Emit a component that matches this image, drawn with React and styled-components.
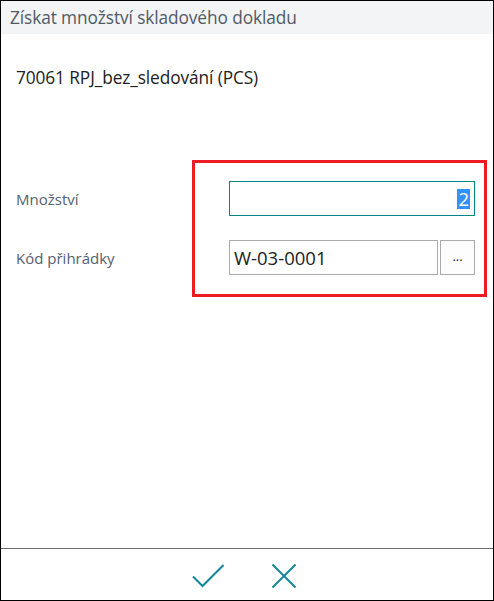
import React from "react"
import styled, { createGlobalStyle } from "styled-components"

const Global = createGlobalStyle`
html, body {
  margin: 0;
  padding: 0;
  background: #ffffff;
}
body {
  font-family: "Open Sans", "Noto Sans", sans-serif;
}
`

const Window = styled.div`
width: 494px;
height: 601px;
box-sizing: border-box;
border: 1px solid #000;
display: flex;
flex-direction: column;
background: #fff;
`

const Header = styled.div`
height: 33px;
flex-shrink: 0;
background: #f3f4f5;
display: flex;
align-items: center;
padding-left: 9px;
font-size: 17.3px;
color: #505a66;
letter-spacing: -0.1px;
`

const Body = styled.div`
flex: 1;
display: flex;
flex-direction: column;
`

const ItemTitle = styled.div`
margin-top: 32px;
padding-left: 15px;
font-size: 17.3px;
color: #212121;
letter-spacing: -0.1px;
`

const Form = styled.div`
position: relative;
margin-top: 92px;
display: grid;
grid-template-columns: 213px 246px;
row-gap: 24px;
padding-left: 15px;
`

const Highlight = styled.div`
position: absolute;
left: 191px;
top: -21px;
width: 295px;
height: 137px;
box-sizing: border-box;
border: 3px solid #ed1c24;
pointer-events: none;
`

const Label = styled.div`
display: flex;
align-items: center;
font-size: 15px;
color: #56606e;
`

const Field = styled.div`
display: flex;
gap: 2px;
height: 35px;
`

const Input = styled.div`
flex: 1;
box-sizing: border-box;
border: 1px solid ${p => (p.$focused ? "#00838a" : "#aaaaaa")};
display: flex;
align-items: center;
justify-content: ${p => (p.$right ? "flex-end" : "flex-start")};
padding: 0 4px;
font-size: 18.5px;
color: #212121;
`

const Selected = styled.span`
background: #3390ff;
color: #fff;
line-height: 20px;
padding: 0 1px;
`

const LookupButton = styled.div`
width: 35px;
box-sizing: border-box;
border: 1px solid #aaaaaa;
background: #fdfdfd;
display: flex;
align-items: flex-end;
justify-content: center;
padding-bottom: 9px;
font-size: 13px;
color: #212121;
`

const Footer = styled.div`
height: 52px;
box-sizing: border-box;
flex-shrink: 0;
border-top: 1px solid #6b6b6b;
display: flex;
justify-content: center;
align-items: center;
gap: 44px;
padding-right: 2px;
padding-top: 3px;
`

const IconButton = styled.div`
width: 32px;
height: 24px;
display: flex;
align-items: center;
justify-content: center;
`

const Check = () => (
  <svg width="32" height="24" viewBox="0 0 32 24">
    <path d="M1 12.5 L10.5 22 L31.5 1" fill="none" stroke="#14879a" strokeWidth="2" />
  </svg>
)

const Cross = () => (
  <svg width="26" height="24" viewBox="0 0 26 24">
    <path d="M1.5 0.5 L24.5 23.5 M24.5 0.5 L1.5 23.5" fill="none" stroke="#14879a" strokeWidth="2" />
  </svg>
)

const App = () => {
  return (
    <>
      <Global />
      <Window>
        <Header>Získat množství skladového dokladu</Header>
        <Body>
          <ItemTitle>70061 RPJ_bez_sledování (PCS)</ItemTitle>
          <Form>
            <Label>Množství</Label>
            <Field>
              <Input $focused $right>
                <Selected>2</Selected>
              </Input>
            </Field>
            <Label>Kód přihrádky</Label>
            <Field>
              <Input>W-03-0001</Input>
              <LookupButton>...</LookupButton>
            </Field>
            <Highlight />
          </Form>
        </Body>
        <Footer>
          <IconButton><Check /></IconButton>
          <IconButton><Cross /></IconButton>
        </Footer>
      </Window>
    </>
  )
}

export default App
